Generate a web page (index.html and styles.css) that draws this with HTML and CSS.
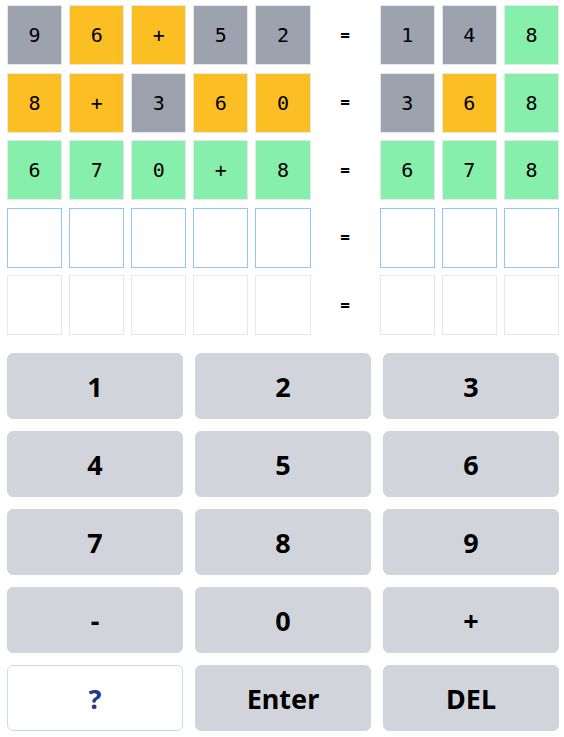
FILE: index.html
```html
<!DOCTYPE html>
<html>
<head>
<meta charset="utf-8">
<link rel="stylesheet" href="styles.css">
</head>
<body>
<div class="app">
  <div class="board">
    <div class="row">
      <div class="tile gray">9</div><div class="tile yellow">6</div><div class="tile yellow">+</div><div class="tile gray">5</div><div class="tile gray">2</div>
      <div class="eq">=</div>
      <div class="tile gray">1</div><div class="tile gray">4</div><div class="tile green">8</div>
    </div>
    <div class="row">
      <div class="tile yellow">8</div><div class="tile yellow">+</div><div class="tile gray">3</div><div class="tile yellow">6</div><div class="tile yellow">0</div>
      <div class="eq">=</div>
      <div class="tile gray">3</div><div class="tile yellow">6</div><div class="tile green">8</div>
    </div>
    <div class="row">
      <div class="tile green">6</div><div class="tile green">7</div><div class="tile green">0</div><div class="tile green">+</div><div class="tile green">8</div>
      <div class="eq">=</div>
      <div class="tile green">6</div><div class="tile green">7</div><div class="tile green">8</div>
    </div>
    <div class="row">
      <div class="tile active"></div><div class="tile active"></div><div class="tile active"></div><div class="tile active"></div><div class="tile active"></div>
      <div class="eq">=</div>
      <div class="tile active"></div><div class="tile active"></div><div class="tile active"></div>
    </div>
    <div class="row">
      <div class="tile"></div><div class="tile"></div><div class="tile"></div><div class="tile"></div><div class="tile"></div>
      <div class="eq">=</div>
      <div class="tile"></div><div class="tile"></div><div class="tile"></div>
    </div>
  </div>
  <div class="keyboard">
    <button class="key">1</button><button class="key">2</button><button class="key">3</button>
    <button class="key">4</button><button class="key">5</button><button class="key">6</button>
    <button class="key">7</button><button class="key">8</button><button class="key">9</button>
    <button class="key">-</button><button class="key">0</button><button class="key">+</button>
    <button class="key help">?</button><button class="key">Enter</button><button class="key">DEL</button>
  </div>
</div>
</body>
</html>
```
FILE: styles.css
```css
* { box-sizing: border-box; }
body {
  margin: 0;
  background: #ffffff;
  font-family: "Noto Sans", "Open Sans", sans-serif;
}
.app {
  padding: 5px 5px 0 7px;
}
.board {
  display: flex;
  flex-direction: column;
  gap: 7.5px;
}
.row {
  display: grid;
  grid-template-columns: repeat(9, 1fr);
  column-gap: 7px;
}
.tile {
  height: 60px;
  border: 1px solid #e5e7eb;
  display: flex;
  align-items: center;
  justify-content: center;
  font-family: "DejaVu Sans Mono", monospace;
  font-size: 20px;
  color: #000;
}
.tile.gray { background: #9ca3af; }
.tile.yellow { background: #fbbf24; }
.tile.green { background: #86efac; }
.tile.active { border-color: #93c5fd; }
.eq {
  display: flex;
  align-items: center;
  justify-content: center;
  font-weight: 700;
  font-size: 17px;
  color: #000;
}
.keyboard {
  margin-top: 18px;
  display: grid;
  grid-template-columns: repeat(3, 176px);
  column-gap: 12px;
  row-gap: 12px;
}
.key {
  height: 66px;
  border: 1px solid #d1d5db;
  border-radius: 6px;
  background: #d1d5db;
  font-family: "Noto Sans", "Open Sans", sans-serif;
  font-weight: 700;
  font-size: 27px;
  color: #000;
  padding: 0;
  display: flex;
  align-items: center;
  justify-content: center;
}
.key.help {
  background: #ffffff;
  border-color: #bfdbfe;
  color: #1e3a8a;
}
```
